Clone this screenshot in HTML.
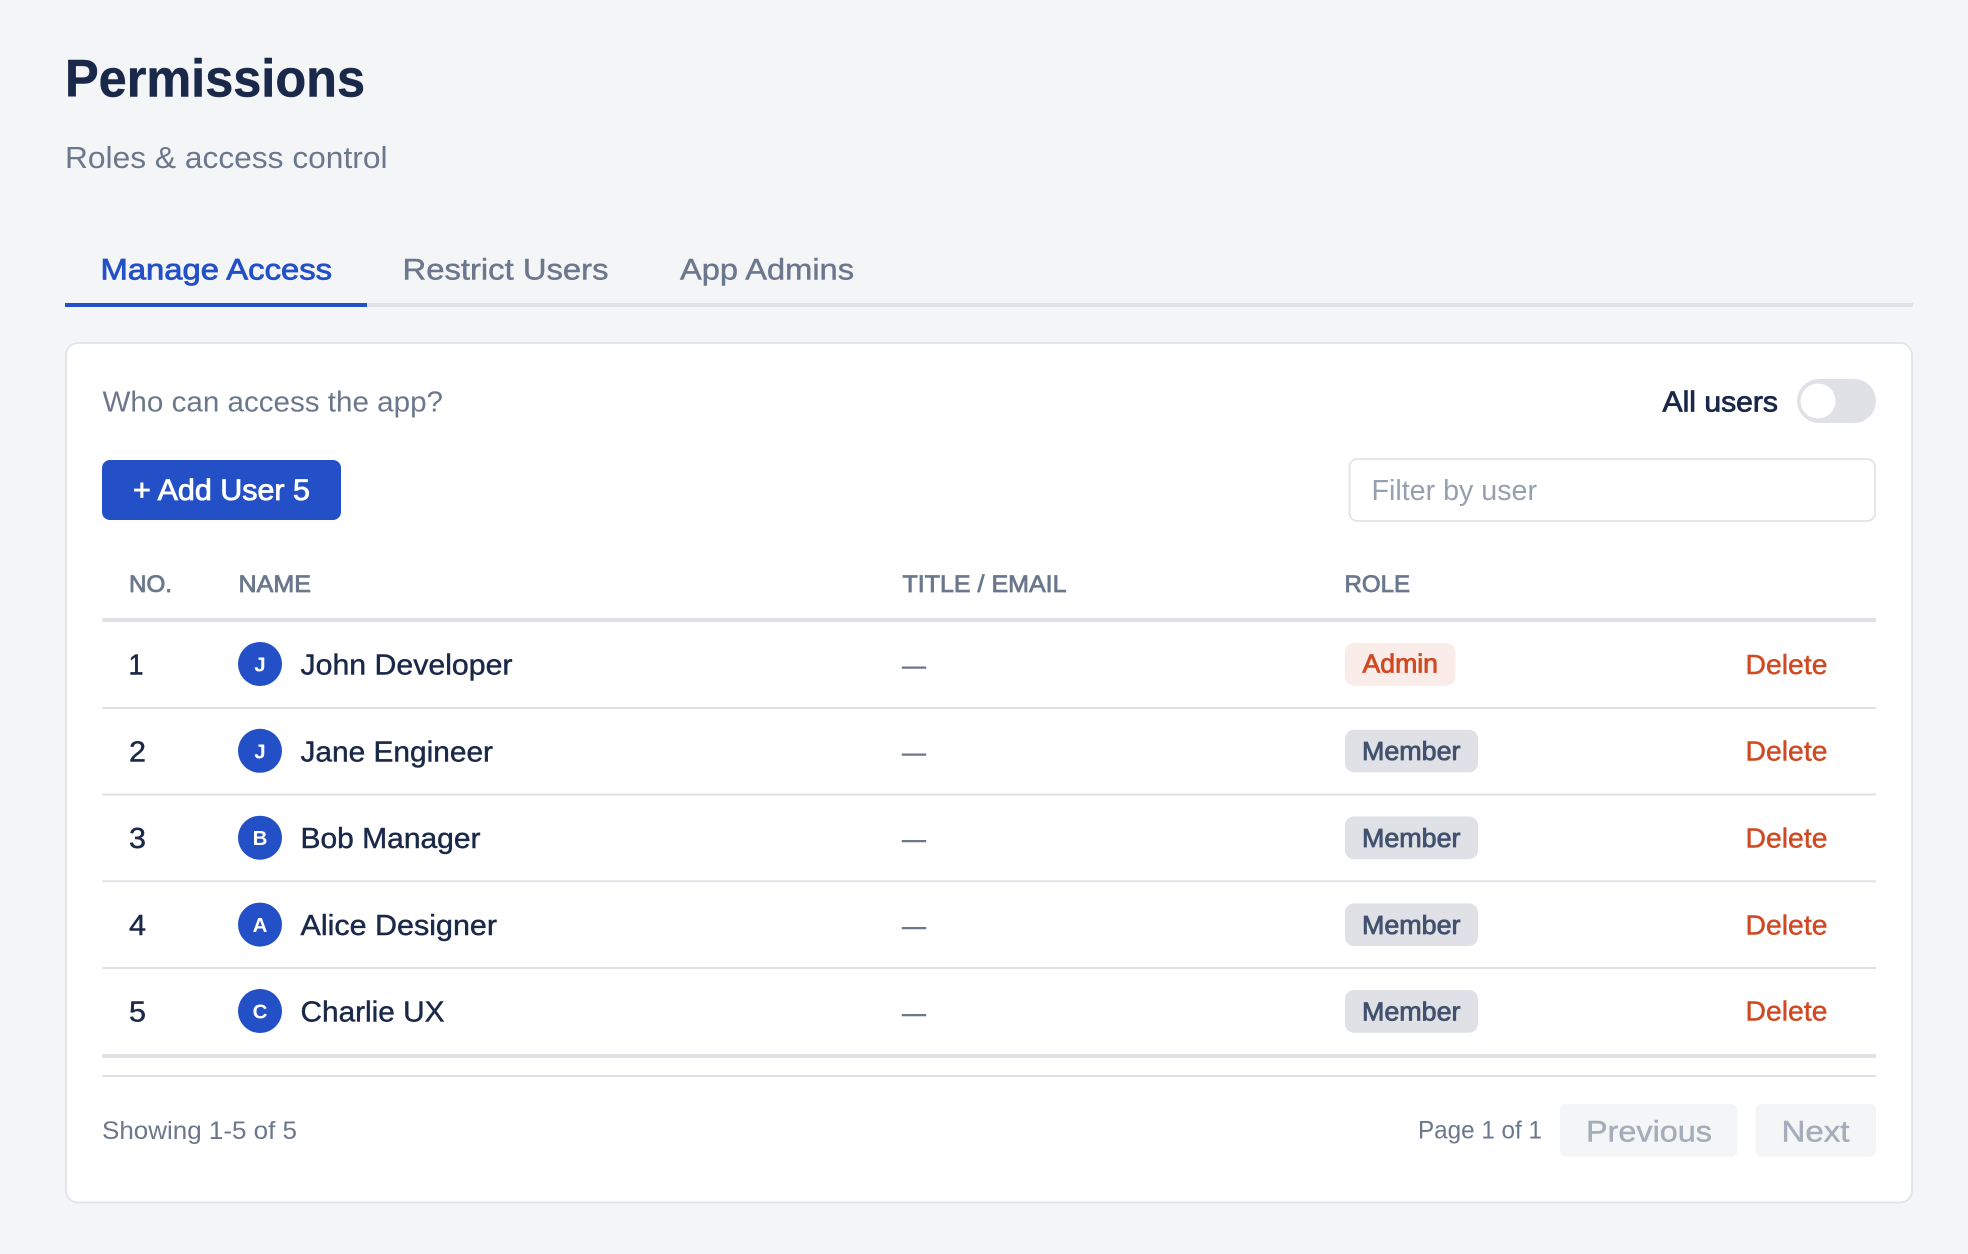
<!DOCTYPE html>
<html lang="en">
<head>
<meta charset="utf-8">
<title>Permissions</title>
<style>
html,body{margin:0;padding:0;background:#f4f5f7;width:1968px;height:1254px;overflow:hidden}
svg{display:block}
text{font-family:"Liberation Sans",Arial,sans-serif;white-space:pre}
.m{stroke-width:.45px}
.sb{stroke-width:.8px}
.n{fill:#1a2849;stroke:#1a2849}
.g{fill:#6b778c;stroke:#6b778c}
.b{fill:#2350c7;stroke:#2350c7}
.r{fill:#cf4a22;stroke:#cf4a22}
.s{fill:#42526e;stroke:#42526e}
.d{fill:#a5adba;stroke:#a5adba}
.p{fill:#97a0af}
.w{fill:#fff;stroke:#fff}
.ln{fill:#dfe1e6}
</style>
</head>
<body>
<svg xmlns="http://www.w3.org/2000/svg" width="1968" height="1254" viewBox="0 0 1968 1254">
<rect width="1968" height="1254" fill="#f4f5f7"/>

<text x="65" y="96.5" font-size="52.5" font-weight="700" fill="#1a2849" stroke="#1a2849" stroke-width=".5" textLength="300" lengthAdjust="spacingAndGlyphs">Permissions</text>
<text x="65" y="168" font-size="30.5" fill="#6b778c" textLength="322.5" lengthAdjust="spacingAndGlyphs">Roles &amp; access control</text>

<text x="100.5" y="279.5" font-size="30" class="b sb" textLength="231.5" lengthAdjust="spacingAndGlyphs">Manage Access</text>
<text x="402.5" y="279.5" font-size="30" class="g m" textLength="206" lengthAdjust="spacingAndGlyphs">Restrict Users</text>
<text x="680" y="279.5" font-size="30" class="g m" textLength="174" lengthAdjust="spacingAndGlyphs">App Admins</text>
<rect x="65" y="303" width="1848" height="4" class="ln"/>
<rect x="65" y="303" width="302" height="4" fill="#2350c7"/>

<rect x="66" y="343" width="1846" height="859.5" rx="12" ry="12" fill="#fff" stroke="#e1e3e8" stroke-width="1.8"/>

<text x="102.5" y="411.5" font-size="28.5" fill="#6b778c" textLength="340.5" lengthAdjust="spacingAndGlyphs">Who can access the app?</text>
<text x="1662.5" y="411.5" font-size="28.5" class="n sb" textLength="115.5" lengthAdjust="spacingAndGlyphs">All users</text>
<rect x="1797" y="379" width="79" height="44" rx="22" fill="#dfe1e6"/>
<circle cx="1818" cy="401" r="17.5" fill="#fff"/>

<rect x="102" y="460" width="239" height="60" rx="8" fill="#2350c7"/>
<text x="133" y="500" font-size="29.5" class="w sb" textLength="177" lengthAdjust="spacingAndGlyphs">+ Add User 5</text>

<rect x="1349.5" y="459" width="525.5" height="62" rx="8" fill="#fff" stroke="#e1e3e8" stroke-width="1.8"/>
<text x="1371.5" y="500" font-size="28.5" class="p" textLength="165.5" lengthAdjust="spacingAndGlyphs">Filter by user</text>

<text x="129" y="592" font-size="24" class="g sb" textLength="43" lengthAdjust="spacingAndGlyphs">NO.</text>
<text x="238.5" y="592" font-size="24" class="g sb" textLength="72.5" lengthAdjust="spacingAndGlyphs">NAME</text>
<text x="902.5" y="592" font-size="24" class="g sb" textLength="164" lengthAdjust="spacingAndGlyphs">TITLE / EMAIL</text>
<text x="1344.5" y="592" font-size="24" class="g sb" textLength="65.5" lengthAdjust="spacingAndGlyphs">ROLE</text>
<rect x="102.3" y="618" width="1773.7" height="4" class="ln"/>

<rect x="102.3" y="707" width="1773.7" height="2" class="ln"/>
<rect x="102.3" y="793.5" width="1773.7" height="2" class="ln"/>
<rect x="102.3" y="880.3" width="1773.7" height="2" class="ln"/>
<rect x="102.3" y="967" width="1773.7" height="2" class="ln"/>
<rect x="102.3" y="1054" width="1773.7" height="4" class="ln"/>
<rect x="102.3" y="1075" width="1773.7" height="2" class="ln"/>

<!-- row 1 -->
<text x="128.5" y="674.5" font-size="28.5" class="n m" textLength="15" lengthAdjust="spacingAndGlyphs">1</text>
<circle cx="260" cy="664" r="22" fill="#2350c7"/>
<text x="260" y="671.5" font-size="20.5" font-weight="700" fill="#fff" text-anchor="middle">J</text>
<text x="300.5" y="674.5" font-size="29" class="n m" textLength="212" lengthAdjust="spacingAndGlyphs">John Developer</text>
<text x="902" y="674" font-size="26" class="g m" textLength="24" lengthAdjust="spacingAndGlyphs">—</text>
<rect x="1345" y="643" width="110.4" height="42.7" rx="9" fill="#faece8"/>
<text x="1362.5" y="672.7" font-size="25.5" class="r sb" textLength="75.5" lengthAdjust="spacingAndGlyphs">Admin</text>
<text x="1745.5" y="673.8" font-size="27.5" class="r m" textLength="82" lengthAdjust="spacingAndGlyphs">Delete</text>

<!-- row 2 -->
<text x="129" y="761.3" font-size="28.5" class="n m" textLength="17" lengthAdjust="spacingAndGlyphs">2</text>
<circle cx="260" cy="750.8" r="22" fill="#2350c7"/>
<text x="260" y="758.3" font-size="20.5" font-weight="700" fill="#fff" text-anchor="middle">J</text>
<text x="300.5" y="761.3" font-size="29" class="n m" textLength="192.5" lengthAdjust="spacingAndGlyphs">Jane Engineer</text>
<text x="902" y="760.8" font-size="26" class="g m" textLength="24" lengthAdjust="spacingAndGlyphs">—</text>
<rect x="1345" y="729.7" width="133" height="42.7" rx="9" fill="#dfe1e6"/>
<text x="1362" y="760" font-size="25.5" class="s sb" textLength="98.5" lengthAdjust="spacingAndGlyphs">Member</text>
<text x="1745.5" y="760.6" font-size="27.5" class="r m" textLength="82" lengthAdjust="spacingAndGlyphs">Delete</text>

<!-- row 3 -->
<text x="129" y="848" font-size="28.5" class="n m" textLength="17" lengthAdjust="spacingAndGlyphs">3</text>
<circle cx="260" cy="837.7" r="22" fill="#2350c7"/>
<text x="260" y="845.2" font-size="20.5" font-weight="700" fill="#fff" text-anchor="middle">B</text>
<text x="300.5" y="848" font-size="29" class="n m" textLength="180" lengthAdjust="spacingAndGlyphs">Bob Manager</text>
<text x="902" y="847.6" font-size="26" class="g m" textLength="24" lengthAdjust="spacingAndGlyphs">—</text>
<rect x="1345" y="816.5" width="133" height="42.7" rx="9" fill="#dfe1e6"/>
<text x="1362" y="846.8" font-size="25.5" class="s sb" textLength="98.5" lengthAdjust="spacingAndGlyphs">Member</text>
<text x="1745.5" y="847.4" font-size="27.5" class="r m" textLength="82" lengthAdjust="spacingAndGlyphs">Delete</text>

<!-- row 4 -->
<text x="129" y="934.8" font-size="28.5" class="n m" textLength="17" lengthAdjust="spacingAndGlyphs">4</text>
<circle cx="260" cy="924.6" r="22" fill="#2350c7"/>
<text x="260" y="932" font-size="20.5" font-weight="700" fill="#fff" text-anchor="middle">A</text>
<text x="300.5" y="934.8" font-size="29" class="n m" textLength="196.5" lengthAdjust="spacingAndGlyphs">Alice Designer</text>
<text x="902" y="934.5" font-size="26" class="g m" textLength="24" lengthAdjust="spacingAndGlyphs">—</text>
<rect x="1345" y="903.4" width="133" height="42.7" rx="9" fill="#dfe1e6"/>
<text x="1362" y="933.8" font-size="25.5" class="s sb" textLength="98.5" lengthAdjust="spacingAndGlyphs">Member</text>
<text x="1745.5" y="934.5" font-size="27.5" class="r m" textLength="82" lengthAdjust="spacingAndGlyphs">Delete</text>

<!-- row 5 -->
<text x="129" y="1021.5" font-size="28.5" class="n m" textLength="17" lengthAdjust="spacingAndGlyphs">5</text>
<circle cx="260" cy="1011" r="22" fill="#2350c7"/>
<text x="260" y="1018.5" font-size="20.5" font-weight="700" fill="#fff" text-anchor="middle">C</text>
<text x="300.5" y="1021.5" font-size="29" class="n m" textLength="144" lengthAdjust="spacingAndGlyphs">Charlie UX</text>
<text x="902" y="1021.3" font-size="26" class="g m" textLength="24" lengthAdjust="spacingAndGlyphs">—</text>
<rect x="1345" y="990" width="133" height="42.7" rx="9" fill="#dfe1e6"/>
<text x="1362" y="1020.3" font-size="25.5" class="s sb" textLength="98.5" lengthAdjust="spacingAndGlyphs">Member</text>
<text x="1745.5" y="1020.6" font-size="27.5" class="r m" textLength="82" lengthAdjust="spacingAndGlyphs">Delete</text>

<!-- footer -->
<text x="102" y="1138.8" font-size="25" fill="#6b778c" textLength="195" lengthAdjust="spacingAndGlyphs">Showing 1-5 of 5</text>
<text x="1418" y="1138.5" font-size="25" fill="#6b778c" textLength="124" lengthAdjust="spacingAndGlyphs">Page 1 of 1</text>
<rect x="1560" y="1104" width="177.3" height="52.7" rx="6" fill="#f4f5f7"/>
<text x="1586" y="1141.3" font-size="30" class="d m" textLength="126" lengthAdjust="spacingAndGlyphs">Previous</text>
<rect x="1755.5" y="1104" width="120.5" height="52.7" rx="6" fill="#f4f5f7"/>
<text x="1781.5" y="1141.3" font-size="30" class="d m" textLength="68" lengthAdjust="spacingAndGlyphs">Next</text>
</svg>
</body>
</html>
